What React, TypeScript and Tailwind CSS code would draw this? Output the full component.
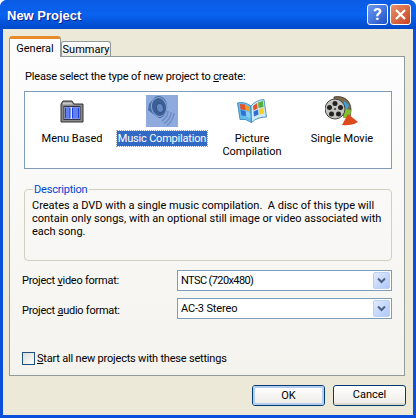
const FONT = "font-['Roboto',Arial,sans-serif]";

function MenuIcon() {
  return (
    <svg width="24" height="23" viewBox="0 0 24 23">
      <path d="M1 4 L3 1 H12 L14 4 H23 V22 H1 Z" fill="#8a8a8a" stroke="#333" strokeWidth="1" />
      <path d="M3 2.5 H11.5 L13 4.5 H3 Z" fill="#c9c9c9" />
      <rect x="4" y="6.5" width="16" height="13" fill="#dfe6f5" stroke="#30304a" strokeWidth="1" />
      <rect x="5" y="7.5" width="5.5" height="11" fill="#1b3fe0" />
      <rect x="12" y="7.5" width="7" height="11" fill="#1b3fe0" />
      <path d="M6 9h3.5M6 11h3.5M6 13h3.5M6 15h3.5M6 17h3.5M13 9h5M13 11h5M13 13h5M13 15h5M13 17h5" stroke="#a9c3ff" strokeWidth="1" />
    </svg>
  );
}

function SpeakerIcon() {
  return (
    <svg width="32" height="32" viewBox="0 0 32 32" className="block">
      <rect width="32" height="32" fill="#8faadc" />
      <path d="M3 9 L9 2 C14 -1 20 3 21 10 C22 17 18 23 13 23 L7 19 L2 15 Z" fill="#4a6fa8" />
      <ellipse cx="13" cy="12" rx="7.5" ry="9.5" transform="rotate(-12 13 12)" fill="#3d5f98" stroke="#86a4d2" strokeWidth="1" />
      <ellipse cx="14" cy="13" rx="3.5" ry="4.5" transform="rotate(-12 14 13)" fill="#6488c0" stroke="#34507f" strokeWidth="1" />
      <path d="M22 16 Q22 22 16 26 M25 17 Q25 24 18 28.5 M28 18 Q27 26 21 30.5" stroke="#6d8fc6" strokeWidth="1.6" fill="none" />
    </svg>
  );
}

function PictureIcon() {
  return (
    <svg width="30" height="24" viewBox="0 0 30 24">
      <path d="M0.5 4 Q7 2 14 7 L14.5 23.5 Q8 19 3 20.5 Z" fill="#63bdec" stroke="#2f7fb5" strokeWidth="0.8" />
      <path d="M14 7 Q19 1 27 0.5 L29.5 18 Q20 18 14.5 23.5 Z" fill="#cfe9f5" stroke="#2f7fb5" strokeWidth="0.8" />
      <path d="M3 5 L8 5.5 L8.5 11 L3.5 10.5 Z" fill="#e8502a" />
      <path d="M8.5 6 L13 8 L13 13 L9 11 Z" fill="#f0a02a" />
      <path d="M3.5 11 L8.5 12 L9 17 L4.5 16.5 Z" fill="#2f6fd6" />
      <path d="M9 12 L13 14 L13.5 19 L9.5 17.5 Z" fill="#8fd0f0" />
      <path d="M16 7 L20 4 L20.5 9.5 L16.5 11.5 Z" fill="#e8502a" />
      <path d="M21 3.5 L26 2 L26.5 8 L21.5 9 Z" fill="#56b03a" />
      <path d="M16.5 12.5 L21 10.5 L21.5 15.5 L17 17.5 Z" fill="#2f6fd6" />
      <path d="M22 10 L26.5 9 L27 14.5 L22.5 15.5 Z" fill="#f5d21f" />
    </svg>
  );
}

function MovieIcon() {
  return (
    <svg width="34" height="30" viewBox="0 0 34 30">
      <path d="M9 1 C18 -1 26 4 26 14 L25 22 L18 20 C20 12 16 6 9 5 Z" fill="#7c6a4e" stroke="#3c3226" strokeWidth="0.8" />
      <path d="M19 5 L24 9 L22 14 L18 10 Z" fill="#3f9fd8" />
      <path d="M18 10 L22 14 L20 19 L17 15 Z" fill="#e6d22e" />
      <path d="M20 13 L26 14 L25 22 L18 22 Z" fill="#7cc030" />
      <circle cx="10" cy="13" r="10" fill="#c4c4c0" stroke="#454545" strokeWidth="1" />
      <circle cx="10" cy="7.5" r="2.5" fill="#222" />
      <circle cx="4.5" cy="11.5" r="2.5" fill="#222" />
      <circle cx="15.5" cy="11.5" r="2.5" fill="#222" />
      <circle cx="6.5" cy="18" r="2.5" fill="#222" />
      <circle cx="13.5" cy="18" r="2.5" fill="#222" />
      <circle cx="10" cy="13" r="1" fill="#333" />
      <path d="M17 29 L23 18 L33 26 Q26 30 17 29 Z" fill="#dd4a1c" />
    </svg>
  );
}

function Chevrons() {
  return (
    <svg width="9" height="7" viewBox="0 0 9 7">
      <path d="M1 1.5 L4.5 5 L8 1.5" fill="none" stroke="#4d6185" strokeWidth="2" />
    </svg>
  );
}

function Select({ value, textClass }: { value: string; textClass: string }) {
  return (
    <div className="flex items-center justify-between w-[215px] h-[21px] border border-[#7f9db9] bg-white pl-[3px] pr-[1px] text-black">
      <span className={textClass}>{value}</span>
      <div className="flex items-center justify-center w-[17px] h-[17px] rounded-[2px] border border-[#bcd0f3] bg-gradient-to-br from-[#e1eafe] to-[#aec8f7]">
        <Chevrons />
      </div>
    </div>
  );
}

function Button({ label, isDefault }: { label: string; isDefault?: boolean }) {
  return (
    <div className="w-[73px] h-[21px] rounded-[3px] border border-[#003c74] bg-gradient-to-b from-white to-[#ecebe5]">
      <div
        className={`flex items-center justify-center h-full rounded-[2px] ${
          isDefault ? "border-2 border-[#b5cdf0]" : "border-b-2 border-[#dcd8cc]"
        }`}
      >
        {label}
      </div>
    </div>
  );
}

const items = [
  { label: "Menu Based", icon: <MenuIcon />, cls: "w-[76px] ml-[9px]" },
  { label: "Music Compilation", icon: <SpeakerIcon />, cls: "w-[92px] ml-[6px]", selected: true },
  { label: "Picture Compilation", icon: <PictureIcon />, cls: "w-[70px] ml-[9px]" },
  { label: "Single Movie", icon: <MovieIcon />, cls: "w-[70px] ml-[20px]" },
];

export default function App() {
  return (
    <div className={`${FONT} w-[416px] h-[418px] bg-white text-[11px] leading-[13px] text-black overflow-hidden`}>
      <div className="flex flex-col h-full rounded-t-[7px] overflow-hidden bg-[#0a4fdc]">
        <div className="flex items-center justify-between shrink-0 h-[29px] pl-[7px] pr-[5px] bg-gradient-to-b from-[#0a5be4] via-[#0a62f0] to-[#0048c8]">
          <span className="pt-[2px] text-white font-bold text-[13px] font-['Liberation_Sans'] [text-shadow:1px_1px_#0f1f8c]">New Project</span>
          <div className="flex gap-[2px]">
            <div className="flex items-center justify-center w-[21px] h-[21px] rounded-[3px] border border-white bg-gradient-to-br from-[#6f9af0] to-[#1f4fc8] text-white font-bold text-[17px]">
              ?
            </div>
            <div className="flex items-center justify-center w-[21px] h-[21px] rounded-[3px] border border-white bg-gradient-to-br from-[#e8906c] to-[#c8401c]">
              <svg width="13" height="13" viewBox="0 0 13 13">
                <path d="M2 2 L11 11 M11 2 L2 11" stroke="white" strokeWidth="2.2" />
              </svg>
            </div>
          </div>
        </div>

        <div className="flex-1 mx-[3px] mb-[3px] bg-[#ece9d8] px-[6px] pt-[7px] flex flex-col">
          <div className="flex items-end h-[20px] relative z-10">
            <div className="w-[52px] h-[21px] mb-[-1px] bg-[#fcfcfe] border-x border-[#919b9c] border-t-[3px] border-t-[#e68b2c] rounded-t-[3px] text-center pt-[3px]">
              General
            </div>
            <div className="w-[50px] h-[15px] bg-gradient-to-b from-white to-[#ecebe5] border-x border-t border-[#919b9c] rounded-t-[3px] text-center pt-[1px]">
              Summary
            </div>
          </div>

          <div className="w-[396px] h-[320px] border border-[#919b9c] bg-gradient-to-b from-[#fdfdfe] to-[#f4f3ee] pl-[14px] pt-[13px]">
            <p className="pl-[1px] tracking-[-0.15px]">
              Please select the type of new project to <span className="underline">c</span>reate:
            </p>

            <div className="flex w-[368px] h-[78px] mt-[8px] border border-[#7f9db9] bg-white">
              {items.map((item) => (
                <div key={item.label} className={`${item.cls} flex flex-col items-center shrink-0`}>
                  <div className="flex items-center justify-center h-[32px] mt-[3px] mb-[4px]">{item.icon}</div>
                  <span
                    className={`text-center px-[1px] py-[1px] ${
                      item.selected
                        ? "whitespace-nowrap tracking-[-0.2px] bg-[#316ac5] text-white outline-dotted outline-1 outline-[#a0a0a0]"
                        : ""
                    }`}
                  >
                    {item.label}
                  </span>
                </div>
              ))}
            </div>

            <div className="relative w-[368px] h-[72px] mt-[20px] border border-[#d0d0bf] rounded-[4px] pl-[7px] pt-[9px]">
              <span className="absolute left-[8px] top-[-7px] bg-[#f9f9f7] px-[1px] text-[#0046d5] tracking-[-0.2px]">Description</span>
              <p className="w-[350px]">
                Creates a DVD with a single music compilation.&nbsp; A disc of this type will contain only songs, with an optional still image or video associated with each song.
              </p>
            </div>

            <div className="flex items-center justify-between w-[368px] mt-[9px]">
              <span className="-ml-[2px] tracking-[-0.25px]">
                Project <span className="underline">v</span>ideo format:
              </span>
              <Select value="NTSC (720x480)" textClass="tracking-[-0.6px]" />
            </div>
            <div className="flex items-center justify-between w-[368px] mt-[7px]">
              <span className="-ml-[2px] mt-[3px] tracking-[-0.25px]">
                Project <span className="underline">a</span>udio format:
              </span>
              <Select value="AC-3 Stereo" textClass="tracking-[-0.15px]" />
            </div>

            <div className="flex items-center gap-[2px] mt-[33px] -ml-[2px] tracking-[-0.2px]">
              <div className="w-[13px] h-[13px] border border-[#1c5180] bg-gradient-to-br from-[#dcdcd7] to-white" />
              <span>
                <span className="underline">S</span>tart all new projects with these settings
              </span>
            </div>
          </div>

          <div className="flex justify-end gap-[8px] mt-[9px] w-[397px]">
            <Button label="OK" isDefault />
            <Button label="Cancel" />
          </div>
        </div>
      </div>
    </div>
  );
}
